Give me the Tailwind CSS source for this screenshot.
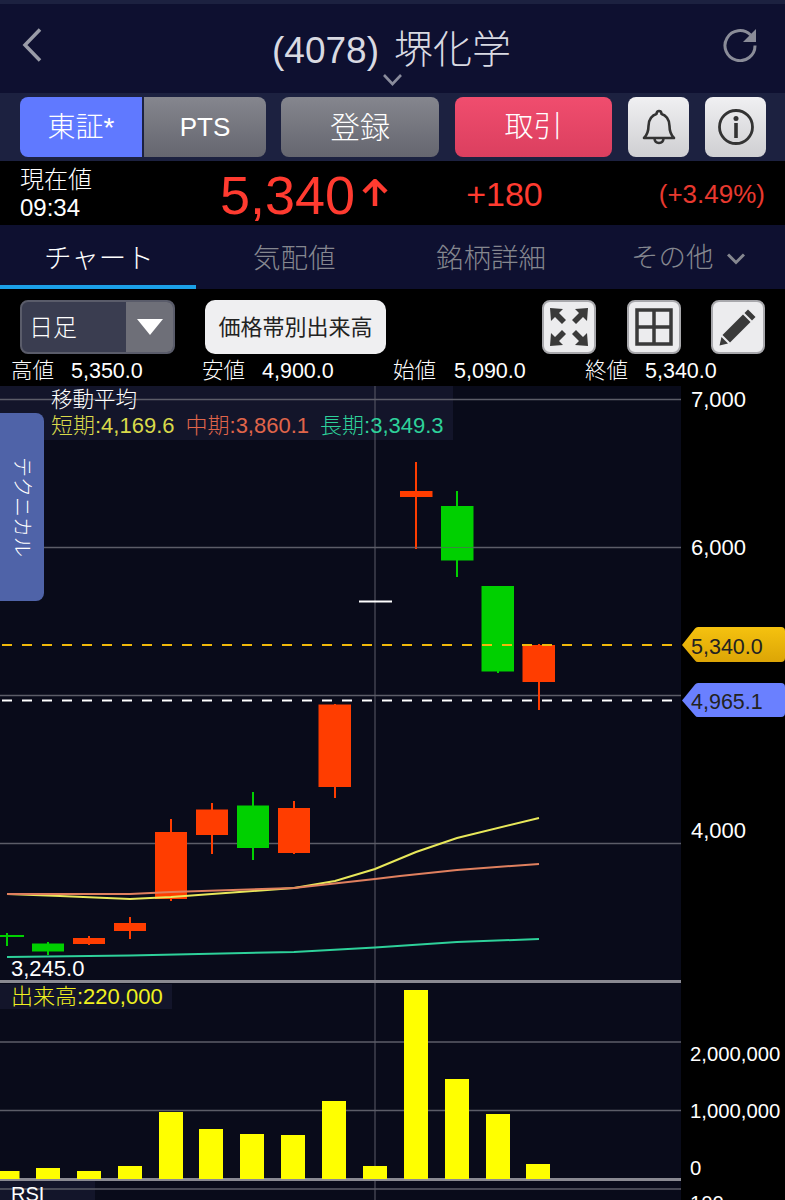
<!DOCTYPE html>
<html lang="ja">
<head>
<meta charset="utf-8">
<script src="https://cdn.jsdelivr.net/npm/@tailwindcss/browser@4"></script>
<title>堺化学</title>
</head>
<body class="bg-black overflow-hidden font-['Liberation_Sans','Noto_Sans_CJK_JP',sans-serif]">
<div class="w-[785px] h-[1200px] overflow-hidden flex flex-col bg-black">

  <!-- Header -->
  <header class="h-[93px] shrink-0 bg-[#0e1030] border-t-4 border-[#1c2140] relative flex items-center justify-between pl-[22px] pr-[28px] pb-[8px]">
    <svg width="20" height="34" viewBox="0 0 20 34" fill="none" stroke="#9a9ca8" stroke-width="3.5"><path d="M18 1.5 3 17l15 15.5"/></svg>
    <h1 class="absolute left-[272px] top-[22px] text-[37px] leading-[48px] font-light text-[#d9dae2] whitespace-nowrap">(4078)<span class="ml-[15px] text-[39px]">堺化学</span></h1>
    <svg class="absolute left-[383px] top-[70px]" width="19" height="12" viewBox="0 0 19 12" fill="none" stroke="#8a8c9c" stroke-width="2.6"><path d="m1 1 8.500 9L18 1"/></svg>
    <svg width="34" height="34" viewBox="0 0 34 34" fill="none"><path d="M27.600 7A15 15 0 1 0 32 17.500" stroke="#8a8c98" stroke-width="3"/><path d="M33 1v13H20z" fill="#8a8c98"/></svg>
  </header>

  <!-- Actions -->
  <nav class="h-[68px] shrink-0 bg-[#1c2140] flex items-center pl-[20px] pb-[1px]">
    <div class="flex w-[246px] h-[60px] rounded-lg overflow-hidden text-white">
      <button class="w-[122px] bg-[#6079ff] text-[28px] font-light pt-[2px]">東証*</button>
      <button class="ml-[2px] flex-1 bg-gradient-to-b from-[#85868e] to-[#65666f] text-[26px] font-light pt-[2px]">PTS</button>
    </div>
    <button class="ml-[15px] w-[158px] h-[60px] rounded-lg bg-gradient-to-b from-[#85868e] to-[#65666f] text-white text-[30px] font-light pt-[2px]">登録</button>
    <button class="ml-[16px] w-[157px] h-[60px] rounded-lg bg-gradient-to-b from-[#f04d6e] to-[#db3f5f] text-white text-[29px] font-light pt-[2px]">取引</button>
    <button class="ml-[16px] w-[61px] h-[60px] rounded-lg bg-gradient-to-b from-[#f0f0f2] to-[#cfcfd2] flex items-center justify-center">
      <svg width="34" height="38" viewBox="0 0 34 38" fill="none" stroke="#333" stroke-width="2.600" stroke-linejoin="round"><path d="M2 30c3-3 4.500-6 4.500-12 0-7 4-11 8-12 0-4 5-4 5 0 4 1 8 5 8 12 0 6 1.500 9 4.500 12z"/><path d="M12.500 30.500c.5 6 8.500 6 9 0"/></svg>
    </button>
    <button class="ml-[16px] w-[61px] h-[60px] rounded-lg bg-gradient-to-b from-[#f0f0f2] to-[#cfcfd2] flex items-center justify-center">
      <svg width="36" height="36" viewBox="0 0 36 36" fill="none"><circle cx="18" cy="18" r="16.500" stroke="#333" stroke-width="2.800"/><circle cx="18" cy="9.500" r="2.500" fill="#333"/><rect x="16.200" y="14" width="3.600" height="15" fill="#333"/></svg>
    </button>
  </nav>

  <!-- Price -->
  <section class="h-[64px] shrink-0 bg-black flex items-center pl-[20px] relative">
    <div class="w-[200px] text-white pt-[1px]">
      <div class="text-[24px] leading-[28px] font-light">現在値</div>
      <div class="text-[24px] leading-[28px] font-light">09:34</div>
    </div>
    <div class="text-[54px] leading-[64px] text-[#ff3b30] pt-[3px]">5,340</div>
    <svg class="ml-[7px] mb-[2px]" width="26" height="27" viewBox="0 0 26 27" fill="none" stroke="#ff3b30" stroke-width="4.500"><path d="M13 27V3M2 13 13 2l11 11"/></svg>
    <div class="ml-[78px] text-[34px] leading-[40px] text-[#ff3b30] font-light pt-[1px]">+180</div>
    <div class="ml-auto pr-[20px] text-[26px] leading-[40px] text-[#e8392f] font-light pt-[1px]">(+3.49%)</div>
  </section>

  <!-- Tabs -->
  <div class="h-[64px] shrink-0 bg-[#0e1030] flex relative text-[27.500px] font-light text-[#85878f]">
    <div class="w-[196px] h-[64px] border-b-[4px] border-[#1ba0e8] text-white pl-[44px] leading-[67px]">チャート</div>
    <div class="pl-[57px] w-[240px] leading-[67px]">気配値</div>
    <div class="w-[195px] leading-[67px]">銘柄詳細</div>
    <div class="flex items-center leading-[67px] h-[65px]">その他
      <svg class="ml-[13px] mt-[2px]" width="18" height="12" viewBox="0 0 18 12" fill="none" stroke="#85878f" stroke-width="3"><path d="m1 1.500 8 8 8-8"/></svg>
    </div>
  </div>

  <!-- Toolbar -->
  <div class="h-[65px] shrink-0 bg-black flex items-center pl-[20px] pt-[11px]">
    <div class="w-[155px] h-[54px] rounded-lg border-2 border-[#5a5c6a] overflow-hidden flex bg-[#3a3d50]">
      <div class="w-[104px] text-white text-[24px] leading-[52px] pl-[7px] font-light">日足</div>
      <div class="flex-1 bg-[#6e6f78] flex items-center justify-center">
        <svg width="26" height="16" viewBox="0 0 26 16"><path d="M0 0h26L13 16z" fill="#fff"/></svg>
      </div>
    </div>
    <button class="ml-[30px] w-[181px] h-[54px] rounded-[10px] bg-[#efeff1] text-[#222] text-[22px]">価格帯別出来高</button>
    <button class="ml-[156px] w-[54px] h-[54px] rounded-lg bg-[#ececee] border-2 border-[#a8a8ac] flex items-center justify-center">
      <svg width="40" height="40" viewBox="0 0 40 40" fill="#3a3a3a">
        <path d="M1 1 14 2 10 6 17 13 13 17 6 10 2 14Z"/>
        <path d="M39 1 26 2 30 6 23 13 27 17 34 10 38 14Z"/>
        <path d="M1 39 14 38 10 34 17 27 13 23 6 30 2 26Z"/>
        <path d="M39 39 26 38 30 34 23 27 27 23 34 30 38 26Z"/>
      </svg>
    </button>
    <button class="ml-[31px] w-[54px] h-[54px] rounded-lg bg-[#ececee] border-2 border-[#a8a8ac] flex items-center justify-center">
      <svg width="38" height="38" viewBox="0 0 38 38" fill="none" stroke="#3a3a3a"><rect x="2" y="2" width="34" height="34" stroke-width="3.500"/><path d="M19 2v34M2 19h34" stroke-width="3.500"/></svg>
    </button>
    <button class="ml-[30px] w-[54px] h-[54px] rounded-lg bg-[#ececee] border-2 border-[#a8a8ac] flex items-center justify-center">
      <svg width="38" height="38" viewBox="0 0 38 38" fill="#3a3a3a"><path d="M29 1.500 36.500 9 33 12.500 25.500 5z"/><path d="M24 6.500 31.500 14 11 34.500 3.500 27z"/><path d="M2.500 29 9 35.500 0.500 37.500z"/></svg>
    </button>
  </div>

  <!-- OHLC -->
  <div class="h-[32px] shrink-0 bg-black flex pl-[11px] text-white text-[21.500px] leading-[35px] font-light">
    <div class="w-[191px] whitespace-nowrap">高値<span class="ml-[17px]">5,350.0</span></div>
    <div class="w-[191px] whitespace-nowrap">安値<span class="ml-[17px]">4,900.0</span></div>
    <div class="w-[192px] whitespace-nowrap">始値<span class="ml-[18px]">5,090.0</span></div>
    <div class="w-[191px] whitespace-nowrap">終値<span class="ml-[17px]">5,340.0</span></div>
  </div>

  <!-- Chart canvas -->
  <div class="relative flex-1 bg-black">
    <svg class="absolute inset-0" width="785" height="814" viewBox="0 386 785 814">
      <defs>
        <linearGradient id="tagY" x1="0" y1="0" x2="0" y2="1"><stop offset="0" stop-color="#f5c20f"/><stop offset="1" stop-color="#dca506"/></linearGradient>
      </defs>
      <rect x="0" y="386" width="681" height="814" fill="#090b1a"/>
      <rect x="0" y="386" width="453" height="54" fill="#13152a"/>
      <rect x="0" y="984" width="172" height="25" fill="#13152a"/>
      <rect x="0" y="1181" width="95" height="19" fill="#13152a"/>
      <g stroke="#5c5d68" stroke-width="1.500">
        <path d="M0 399.500H681M0 547.500H681M0 695.500H681M0 843.500H681M0 1042H681M0 1110.500H681M0 1189H681"/>
        <path d="M375 386V1200" stroke-width="1"/>
      </g>
      <path d="M0 981.500H681M0 1179.500H681" stroke="#8a8a92" stroke-width="3"/>

      <!-- Volume -->
      <g fill="#ffff00">
        <rect x="0" y="1171" width="19.500" height="8"/>
        <rect x="36" y="1168" width="24" height="11"/>
        <rect x="77" y="1171" width="24" height="8"/>
        <rect x="118" y="1166" width="24" height="13"/>
        <rect x="159" y="1112" width="24" height="67"/>
        <rect x="199" y="1129" width="24" height="50"/>
        <rect x="240" y="1134" width="24" height="45"/>
        <rect x="281" y="1135" width="24" height="44"/>
        <rect x="322" y="1101" width="24" height="78"/>
        <rect x="363" y="1166" width="24" height="13"/>
        <rect x="404" y="990" width="24" height="189"/>
        <rect x="445" y="1079" width="24" height="100"/>
        <rect x="486" y="1114" width="24" height="65"/>
        <rect x="526" y="1164" width="24" height="15"/>
      </g>

      <!-- Wicks -->
      <g stroke="#ff3d00" stroke-width="2">
        <path d="M89 936V945M130 917V939M171 819V901M212 803V854M294 801V854M335 704V798M416 462V549M539 644V710"/>
      </g>
      <g stroke="#00d000" stroke-width="2">
        <path d="M7 933V946M0 936H24M48 942V955M253 792V860M457 491V577M498 586V673"/>
      </g>
      <!-- Bodies -->
      <g fill="#ff3d00">
        <rect x="73" y="938" width="32" height="6"/>
        <rect x="114" y="923" width="32" height="8"/>
        <rect x="155" y="832" width="32" height="67"/>
        <rect x="196" y="809.500" width="32" height="25.500"/>
        <rect x="278" y="808" width="32" height="45"/>
        <rect x="318.500" y="704.500" width="32.500" height="82.500"/>
        <rect x="400" y="491" width="32.500" height="6"/>
        <rect x="522.500" y="645" width="32.500" height="37"/>
      </g>
      <g fill="#00d000">
        <rect x="32" y="943.500" width="32" height="8"/>
        <rect x="237" y="805.500" width="32" height="42.500"/>
        <rect x="441" y="506" width="32.500" height="54.500"/>
        <rect x="481.500" y="586" width="32.500" height="85.500"/>
      </g>
      <path d="M359 601.500H392" stroke="#fff" stroke-width="2"/>
      <path d="M0 547.500H681" stroke="#5c5d68" stroke-width="1" opacity=".6"/>

      <!-- Moving averages -->
      <polyline fill="none" stroke="#2ed19a" stroke-width="2" points="7,957 130,955.500 294,952 375,947.500 457,942 539,939"/>
      <polyline fill="none" stroke="#e8e85a" stroke-width="2" points="7,894 60,896 130,899 171,897 253,891 294,888 335,881 375,869 416,852 457,838 539,818"/>
      <polyline fill="none" stroke="#e0805f" stroke-width="2" points="7,894 130,894 171,892 294,888 375,879 400,876 457,870 539,864"/>

      <!-- Price lines -->
      <path d="M2 645H680" stroke="#f0b90b" stroke-width="2" stroke-dasharray="10 10"/>
      <path d="M2 700.500H680" stroke="#fff" stroke-width="2" stroke-dasharray="10 10"/>
      <path d="M682 645 695 628.500Q696 627 698 627H781Q785 627 785 631V658Q785 662 781 662H698Q696 662 695 660.500Z" fill="url(#tagY)"/>
      <path d="M682 700.500 695 684.500Q696 683 698 683H781Q785 683 785 687V713Q785 717 781 717H698Q696 717 695 715.500Z" fill="#6a80ff"/>
    </svg>

    <!-- Labels over the chart -->
    <div class="absolute left-0 top-[27px] w-[44px] h-[188px] rounded-r-lg bg-[#4f63a8] flex items-center justify-center">
      <span class="text-[20px] font-light text-white [writing-mode:vertical-rl] [text-orientation:sideways]">テクニカル</span>
    </div>
    <div class="absolute left-[51px] top-0 text-[21.500px] leading-[28px] font-light text-white">移動平均</div>
    <div class="absolute left-[51px] top-[26px] text-[22px] leading-[28px] font-light whitespace-nowrap">
      <span class="text-[#d9d94a]">短期:4,169.6</span><span class="ml-[11px] text-[#e0654a]">中期:3,860.1</span><span class="ml-[11px] text-[#2ed19a]">長期:3,349.3</span>
    </div>
    <div class="absolute left-[11px] top-[571px] text-[22px] leading-[24px] font-light text-white">3,245.0</div>
    <div class="absolute left-[11px] top-[598px] text-[22px] leading-[26px] font-light text-[#f0f020] whitespace-nowrap">出来高:220,000</div>
    <div class="absolute left-[11px] top-[795px] text-[20px] leading-[26px] font-light text-white">RSI</div>

    <div class="absolute left-[691px] top-0 text-[22px] leading-[28px] font-light text-white">7,000</div>
    <div class="absolute left-[691px] top-[148px] text-[22px] leading-[28px] font-light text-white">6,000</div>
    <div class="absolute left-[691px] top-[431px] text-[22px] leading-[28px] font-light text-white">4,000</div>
    <div class="absolute left-[691px] top-[247px] text-[21.500px] leading-[28px] text-[#222]">5,340.0</div>
    <div class="absolute left-[691px] top-[302px] text-[21.500px] leading-[28px] text-[#222]">4,965.1</div>
    <div class="absolute left-[690px] top-[654px] text-[20.300px] leading-[28px] font-light text-white">2,000,000</div>
    <div class="absolute left-[690px] top-[711px] text-[20.300px] leading-[28px] font-light text-white">1,000,000</div>
    <div class="absolute left-[690px] top-[768px] text-[20.300px] leading-[28px] font-light text-white">0</div>
    <div class="absolute left-[690px] top-[803px] text-[20.300px] leading-[28px] font-light text-white">100</div>
  </div>
</div>
</body>
</html>
